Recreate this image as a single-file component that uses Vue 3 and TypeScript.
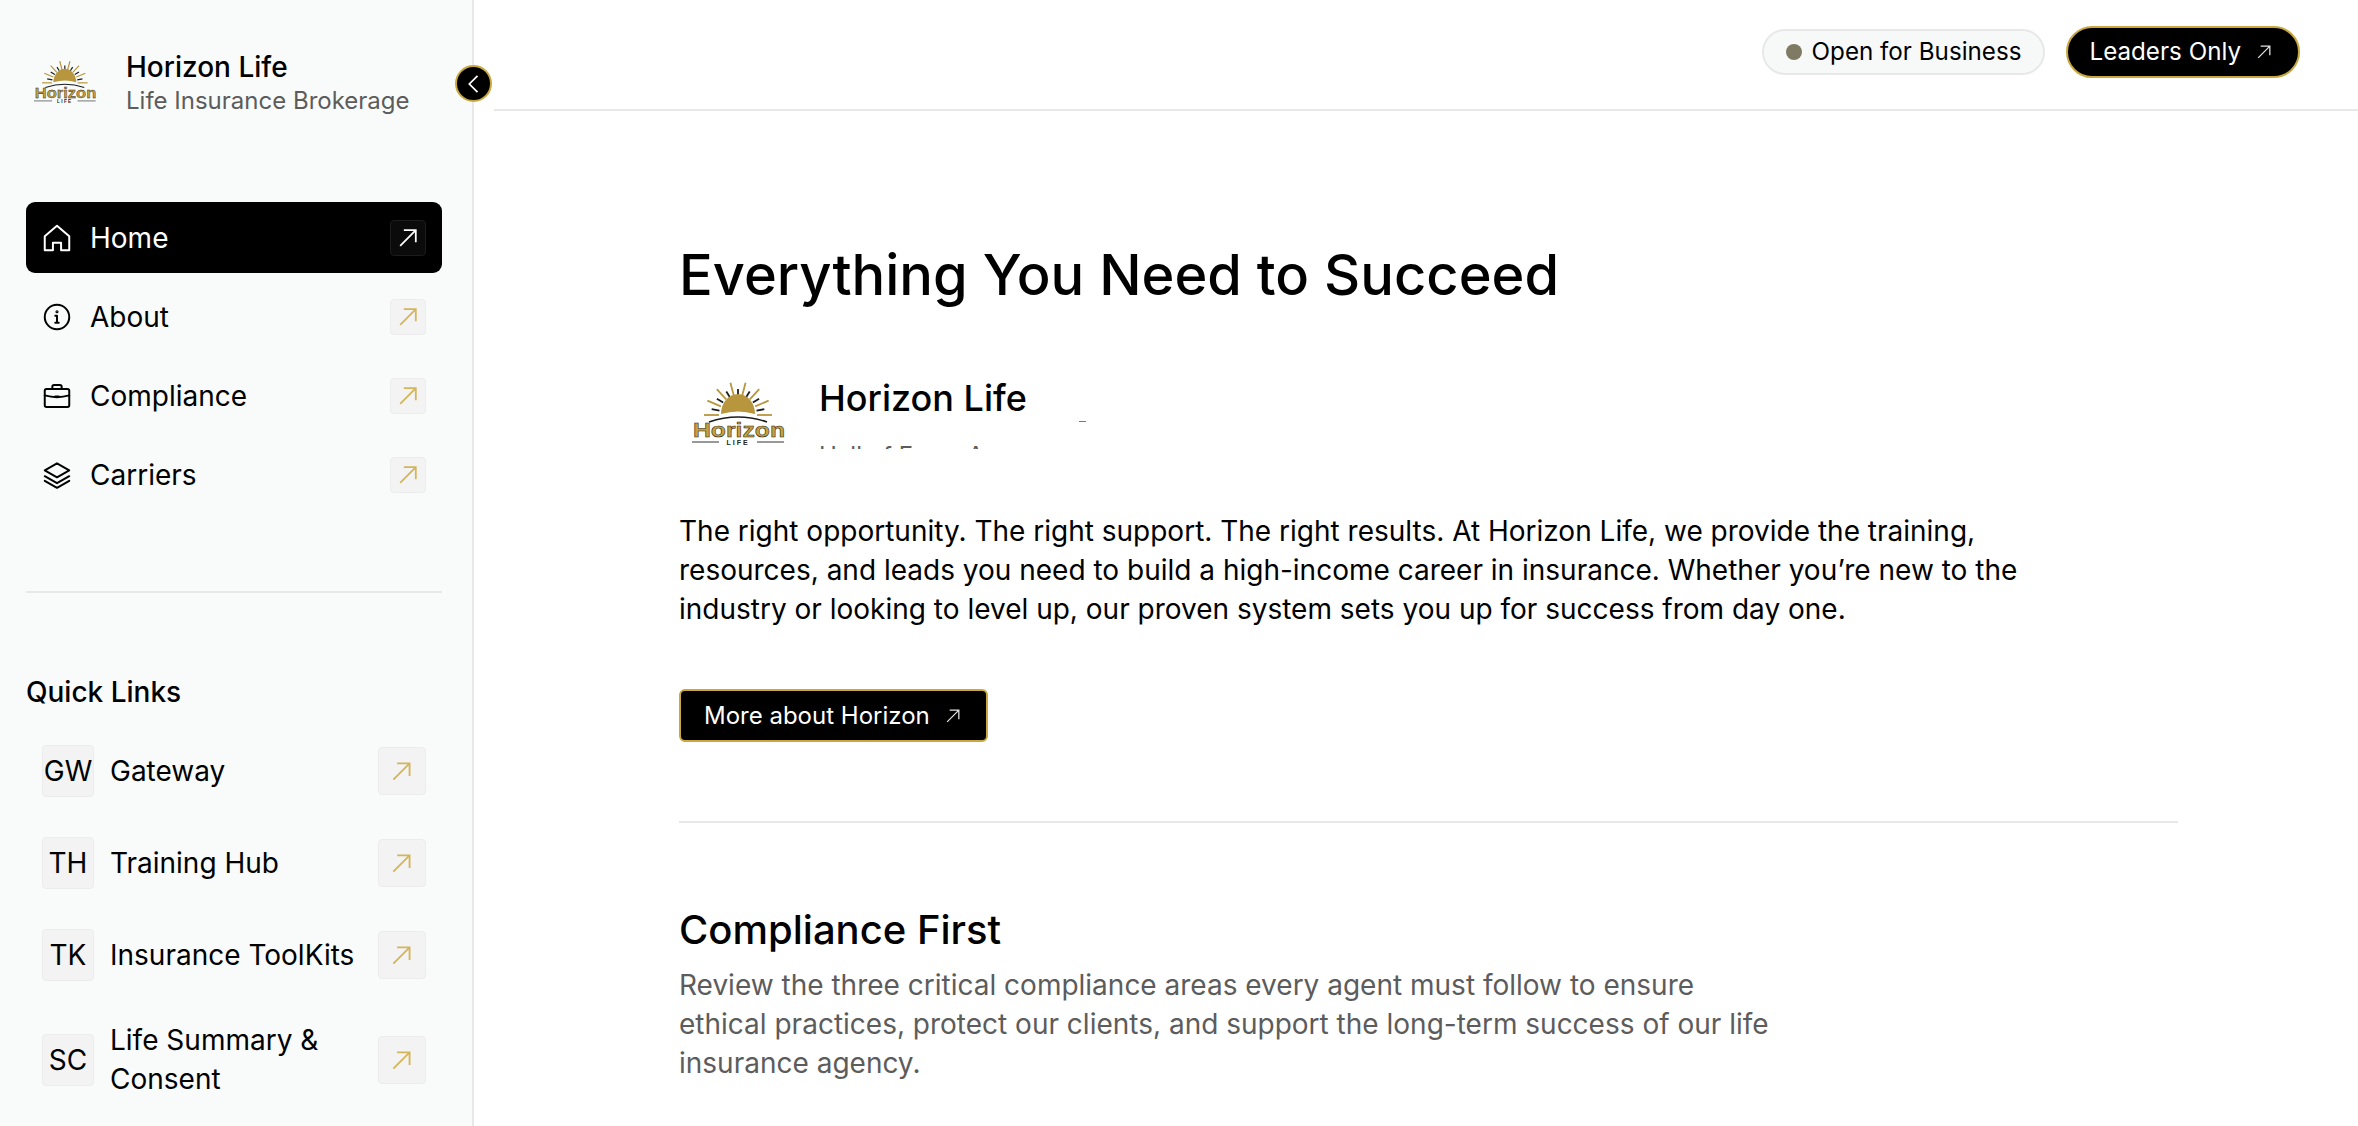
<script setup lang="ts">
const nav = [
  { label: 'Home', icon: 'home', active: true },
  { label: 'About', icon: 'info', active: false },
  { label: 'Compliance', icon: 'case', active: false },
  { label: 'Carriers', icon: 'layers', active: false },
]
const links = [
  { code: 'GW', label: 'Gateway' },
  { code: 'TH', label: 'Training Hub' },
  { code: 'TK', label: 'Insurance ToolKits' },
  { code: 'SC', label: 'Life Summary & Consent' },
]
const rays = Array.from({ length: 15 }, (_, i) => {
  const a = (Math.PI * (i + 0.0)) / 14
  const r = i % 2 === 0 ? 34 : 27
  return {
    x1: 49 - Math.cos(a) * 19,
    y1: 34 - Math.sin(a) * 20,
    x2: 49 - Math.cos(a) * r,
    y2: 34 - Math.sin(a) * (r - 1),
    c: i % 2 === 0 ? '#b8963e' : '#1c1c1c',
  }
})
</script>

<template>
  <div class="app">
    <aside class="side">
      <div class="brand">
        <svg class="logo small" viewBox="0 0 100 70">
          <line v-for="(r, i) in rays" :key="i" :x1="r.x1" :y1="r.y1" :x2="r.x2" :y2="r.y2" :stroke="r.c" stroke-width="1.8" />
          <path d="M32 33a17 20 0 0 1 34 0q-17-5-34 0z" fill="#b8963e" />
          <path d="M20 41q29-10 58 0" fill="none" stroke="#1c1c1c" stroke-width="1.6" />
          <text x="4" y="56" class="lt1" textLength="92" lengthAdjust="spacingAndGlyphs">Horizon</text>
          <text x="49" y="64" text-anchor="middle" class="lt2">LIFE</text>
          <path d="M3 61h27M68 61h27" stroke="#333" stroke-width="1" />
        </svg>
        <div class="brand-text">
          <div class="b1">Horizon Life</div>
          <div class="b2">Life Insurance Brokerage</div>
        </div>
      </div>
      <nav class="nav">
        <a v-for="n in nav" :key="n.label" class="nav-item" :class="{ active: n.active }">
          <svg class="ni" viewBox="0 0 24 24" fill="none" stroke="currentColor" stroke-width="1.7" stroke-linecap="round" stroke-linejoin="round">
            <template v-if="n.icon === 'home'">
              <path d="M1.500 10.500 12 1.500l10.500 9v12h-7V16h-7v6.500h-7z" />
            </template>
            <template v-else-if="n.icon === 'info'">
              <circle cx="12" cy="12" r="10.500" /><path d="M12 11v6M10.500 11H12M10.500 17h3" /><circle cx="12" cy="7.500" r=".5" />
            </template>
            <template v-else-if="n.icon === 'case'">
              <rect x="1.500" y="6" width="21" height="15.500" rx="1.500" /><path d="M8 6V4a1.500 1.500 0 0 1 1.500-1.500h5A1.500 1.500 0 0 1 16 4v2M1.500 11.500q10.500 3 21 0M10.500 12.500h3" />
            </template>
            <template v-else>
              <path d="M12 2 22.500 8 12 14 1.500 8zM1.500 13l10.500 6 10.500-6M1.500 17l10.500 6 10.500-6" />
            </template>
          </svg>
          <span class="nl">{{ n.label }}</span>
          <span class="arrow-box">
            <svg viewBox="0 0 24 24" fill="none" stroke="currentColor" stroke-width="1.7"><path d="M4 20 19 5M7.500 5H19v11.500" /></svg>
          </span>
        </a>
      </nav>
      <hr class="side-rule" />
      <h3 class="ql">Quick Links</h3>
      <div class="links">
        <a v-for="l in links" :key="l.code" class="link">
          <span class="code">{{ l.code }}</span>
          <span class="ll">{{ l.label }}</span>
          <span class="arrow-box big">
            <svg viewBox="0 0 24 24" fill="none" stroke="currentColor" stroke-width="1.7"><path d="M4 20 19 5M7.500 5H19v11.500" /></svg>
          </span>
        </a>
      </div>
      <button class="toggle">
        <svg viewBox="0 0 24 24" fill="none" stroke="#fff" stroke-width="1.5"><path d="M15 5 8 12l7 7" /></svg>
      </button>
    </aside>
    <div class="right">
      <header class="top">
        <span class="status"><i class="dot"></i>Open for Business</span>
        <a class="leaders">Leaders Only
          <svg viewBox="0 0 24 24" fill="none" stroke="currentColor" stroke-width="1.500"><path d="M5 19 19 5M8 5h11v11" /></svg>
        </a>
      </header>
      <main class="main">
        <h1>Everything You Need to Succeed</h1>
        <div class="profile">
          <svg class="logo large" viewBox="0 0 100 70">
            <line v-for="(r, i) in rays" :key="i" :x1="r.x1" :y1="r.y1" :x2="r.x2" :y2="r.y2" :stroke="r.c" stroke-width="1.8" />
            <path d="M32 33a17 20 0 0 1 34 0q-17-5-34 0z" fill="#b8963e" />
            <path d="M20 41q29-10 58 0" fill="none" stroke="#1c1c1c" stroke-width="1.6" />
            <text x="4" y="56" class="lt1" textLength="92" lengthAdjust="spacingAndGlyphs">Horizon</text>
            <text x="49" y="64" text-anchor="middle" class="lt2">LIFE</text>
            <path d="M3 61h27M68 61h27" stroke="#333" stroke-width="1" />
          </svg>
          <div class="pt">
            <div class="p1">Horizon Life</div>
            <div class="p2">Hall of Fame Agency</div>
          </div>
          <i class="tick"></i>
        </div>
        <p class="lead">The right opportunity. The right support. The right results. At Horizon Life, we provide the training, resources, and leads you need to build a high-income career in insurance. Whether you’re new to the industry or looking to level up, our proven system sets you up for success from day one.</p>
        <a class="more">More about Horizon
          <svg viewBox="0 0 24 24" fill="none" stroke="currentColor" stroke-width="1.500"><path d="M5 19 19 5M8 5h11v11" /></svg>
        </a>
        <hr class="rule" />
        <h2>Compliance First</h2>
        <p class="sub">Review the three critical compliance areas every agent must follow to ensure ethical practices, protect our clients, and support the long-term success of our life insurance agency.</p>
      </main>
    </div>
  </div>
</template>

<style>
html, body { margin: 0; height: 100%; overflow: hidden; background: #fff; }
</style>

<style scoped>
* { box-sizing: border-box; }
.app { display: flex; width: 2358px; height: 1126px; overflow: hidden; font-family: Inter, "Liberation Sans", sans-serif; color: #000; }
.side { position: relative; flex: 0 0 474px; background: #f9fbfb; border-right: 2px solid #e8e8e8; padding: 0 30px 0 26px; }
.brand { display: flex; align-items: center; height: 112px; margin-top: 27px; margin-left: 6px; }
.logo.small { width: 67px; height: 47px; margin-right: 27px; flex: none; }
.logo.large { width: 100px; height: 70px; flex: none; margin-top: 10px; }
.lt1 { font: 700 21px "Liberation Sans", sans-serif; fill: #c9a13c; stroke: #1c1c1c; stroke-width: .5px; }
.lt2 { font: 700 7px "Liberation Sans", sans-serif; fill: #222; letter-spacing: 2px; }
.b1 { font-size: 28px; font-weight: 500; line-height: 36px; }
.b2 { font-size: 24px; color: #5c5c5c; line-height: 32px; }
.nav { margin-top: 63px; display: flex; flex-direction: column; gap: 8px; }
.nav-item { display: flex; align-items: center; height: 71px; padding: 0 16px 0 17px; border-radius: 9px; font-size: 28px; }
.nav-item.active { background: #000; color: #fff; }
.ni { width: 28px; height: 28px; margin-right: 19px; flex: none; }
.nl { flex: 1; }
.arrow-box { width: 36px; height: 36px; border-radius: 4px; background: #f3f3f3; border: 1px solid #ececec; color: #d4b55a; display: flex; align-items: center; justify-content: center; flex: none; }
.arrow-box svg { width: 25px; height: 25px; }
.active .arrow-box { background: #0b0b0b; border-color: #1c1c1c; color: #fff; }
.arrow-box.big { width: 48px; height: 48px; }
.arrow-box.big svg { width: 26px; height: 26px; }
.side-rule { border: 0; border-top: 2px solid #e8e8e8; margin: 81px 0 0; }
.ql { font-size: 28px; font-weight: 500; margin: 81px 0 0; line-height: 36px; }
.links { margin-top: 35px; display: flex; flex-direction: column; gap: 40px; }
.link { display: flex; align-items: center; padding: 0 16px; font-size: 28px; line-height: 39px; }
.code { width: 52px; height: 52px; border-radius: 4px; background: #f3f3f3; border: 1px solid #ececec; display: flex; align-items: center; justify-content: center; margin-right: 16px; flex: none; }
.ll { flex: 1; padding-right: 14px; }
.toggle { position: absolute; left: 455px; top: 65px; width: 37px; height: 37px; border-radius: 50%; padding: 0; background: #000; border: 2px solid #c9a83f; display: flex; align-items: center; justify-content: center; }
.toggle svg { width: 28px; height: 28px; }
.right { flex: 1; min-width: 0; padding-left: 20px; }
.top { display: flex; justify-content: flex-end; align-items: center; gap: 21px; height: 111px; border-bottom: 2px solid #e8e8e8; padding: 0 58px 6px 0; }
.status { display: inline-flex; align-items: center; height: 46px; padding: 0 22px; border-radius: 24px; background: #f7f9f9; border: 2px solid #e8e8e8; font-size: 24.2px; }
.dot { width: 16px; height: 16px; border-radius: 50%; background: #7f7a63; margin-right: 10px; }
.leaders { display: inline-flex; align-items: center; height: 52px; padding: 0 24px 0 21px; border-radius: 27px; background: #000; color: #fff; border: 2px solid #c9a83f; font-size: 24.2px; gap: 13px; }
.leaders svg, .more svg { width: 20px; height: 20px; color: #e4e4e4; }
.main { padding: 129px 0 0 185px; width: 1690px; }
h1 { margin: 0; font-size: 56px; font-weight: 500; line-height: 70px; }
.profile { position: relative; display: flex; align-items: flex-start; margin-top: 61px; gap: 30px; height: 80px; padding-left: 10px; }
.tick { position: absolute; left: 400px; top: 50px; width: 7px; height: 1px; background: #777; }
.pt { height: 78px; overflow: hidden; padding-top: 3px; }
.p1 { font-size: 36px; font-weight: 500; line-height: 48px; }
.p2 { margin-top: 18px; font-size: 24px; line-height: 32px; color: #5c5c5c; }
.lead { margin: 61px 0 0; width: 1400px; font-size: 28px; line-height: 39px; }
.more { display: inline-flex; align-items: center; margin-top: 60px; height: 53px; padding: 0 23px; gap: 13px; border-radius: 6px; background: #000; color: #fff; border: 2px solid #c9a83f; font-size: 24px; }
.rule { border: 0; border-top: 2px solid #e8e8e8; margin: 79px 0 0; width: 1499px; }
h2 { margin: 81px 0 0; font-size: 40px; font-weight: 500; line-height: 52px; }
.sub { margin: 10px 0 0; width: 1100px; font-size: 28px; line-height: 39px; color: #5c5c5c; }
</style>
